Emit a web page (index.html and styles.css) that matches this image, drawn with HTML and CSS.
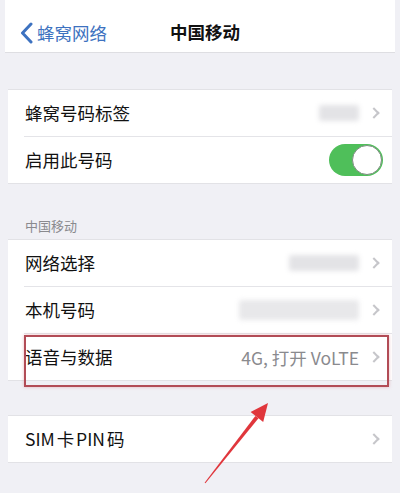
FILE: index.html
```html
<!DOCTYPE html>
<html lang="zh-CN">
<head>
<meta charset="utf-8">
<title>中国移动</title>
<link rel="stylesheet" href="styles.css">
</head>
<body>
<div class="page">
  <header class="nav">
    <a class="back">
      <svg class="back-icon" width="13" height="22" viewBox="0 0 13 22"><path d="M11 2 L2.5 11 L11 20" fill="none" stroke="#3d72c0" stroke-width="3" stroke-linecap="round" stroke-linejoin="round"/></svg>
      <span>蜂窝网络</span>
    </a>
    <h1 class="title">中国移动</h1>
  </header>

  <section class="group group-first">
    <div class="row">
      <span class="label">蜂窝号码标签</span>
      <span class="value"><span class="blur blur-sm"></span></span>
      <span class="chev"></span>
    </div>
    <div class="row">
      <span class="label">启用此号码</span>
      <span class="toggle"><span class="knob"></span></span>
    </div>
  </section>

  <div class="section-head">中国移动</div>
  <section class="group">
    <div class="row">
      <span class="label">网络选择</span>
      <span class="value"><span class="blur blur-md"></span></span>
      <span class="chev"></span>
    </div>
    <div class="row">
      <span class="label">本机号码</span>
      <span class="value"><span class="blur blur-lg"></span></span>
      <span class="chev"></span>
    </div>
    <div class="row">
      <span class="label">语音与数据</span>
      <span class="value text">4G, 打开 VoLTE</span>
      <span class="chev"></span>
    </div>
  </section>

  <section class="group group-sim">
    <div class="row">
      <span class="label sim">SIM 卡 PIN 码</span>
      <span class="value"></span>
      <span class="chev"></span>
    </div>
  </section>

  <div class="highlight"></div>
  <svg class="arrow" width="400" height="493" viewBox="0 0 400 493">
    <polygon points="205.4,483.3 204.6,482.7 255.3,415.9 258.5,418.3" fill="#e0363c"/>
    <polygon points="268,403 263.2,422.1 250.6,412.1" fill="#e0363c"/>
  </svg>
</div>
</body>
</html>
```
FILE: styles.css
```css
* { box-sizing: border-box; }
html, body { margin: 0; padding: 0; }
body {
  background: #f0f0f5;
  font-family: "Noto Sans CJK SC", "Noto Sans", sans-serif;
  color: #111;
}
.page {
  position: relative;
  width: 400px;
  height: 493px;
  overflow: hidden;
  padding: 0 8px;
}
.nav {
  height: 53px;
  background: #fff;
  border-bottom: 1px solid #dedee2;
  display: flex;
  align-items: center;
  justify-content: center;
  position: relative;
  margin: 0 -3px;
  padding-top: 11px;
}
.back {
  position: absolute;
  left: 15px;
  top: 21px;
  display: flex;
  align-items: center;
  gap: 4px;
  color: #3d72c0;
  font-size: 17.5px;
  line-height: 24px;
}
.back-icon { display: block; }
.title {
  margin: 0 0 0 10px;
  font-size: 17.5px;
  font-weight: 700;
  line-height: 24px;
}
.group {
  background: #fff;
  border-top: 1px solid #e2e2e6;
  border-bottom: 1px solid #e2e2e6;
}
.group-first { margin-top: 36px; }
.group-sim { margin-top: 34px; }
.row {
  height: 46px;
  display: flex;
  align-items: center;
  padding: 0 12px 0 17px;
  position: relative;
}
.row + .row::before {
  content: "";
  position: absolute;
  left: 16px;
  right: 0;
  top: -1px;
  height: 1px;
  background: #e4e4e8;
}
.row + .row { margin-top: 1px; }
.label {
  font-size: 17.5px;
  line-height: 24px;
  flex: 1;
}
.label.sim { word-spacing: -2px; }
.value {
  display: flex;
  align-items: center;
  color: #8a8a8e;
  font-size: 17.5px;
  margin-right: 11px;
}
.chev {
  width: 8px;
  height: 8px;
  border-top: 2px solid #c6c6ca;
  border-right: 2px solid #c6c6ca;
  transform: rotate(45deg);
  margin-right: 2px;
}
.blur {
  display: block;
  height: 16px;
  background: #e3e3e6;
  filter: blur(2.5px);
  border-radius: 3px;
}
.blur-sm { width: 40px; }
.blur-md { width: 70px; }
.blur-lg { width: 120px; height: 20px; background: #e8e8ea; }
.toggle {
  width: 54px;
  height: 32px;
  border-radius: 16px;
  background: #4fbf5a;
  position: relative;
  margin-right: -3px;
}
.knob {
  position: absolute;
  right: 1px;
  top: 1px;
  width: 30px;
  height: 30px;
  border-radius: 50%;
  background: #fff;
  border: 1.5px solid #7d8c80;
}
.section-head {
  font-size: 13px;
  color: #8a8a8e;
  padding: 33px 0 0 17px;
  height: 55px;
  line-height: 18px;
}
.highlight {
  position: absolute;
  left: 24px;
  top: 335px;
  width: 365px;
  height: 52px;
  border: 2px solid #b24c56;
  box-shadow: 0 0 3px rgba(220, 120, 130, 0.5);
}
.arrow {
  position: absolute;
  left: 0;
  top: 0;
  pointer-events: none;
}
```
